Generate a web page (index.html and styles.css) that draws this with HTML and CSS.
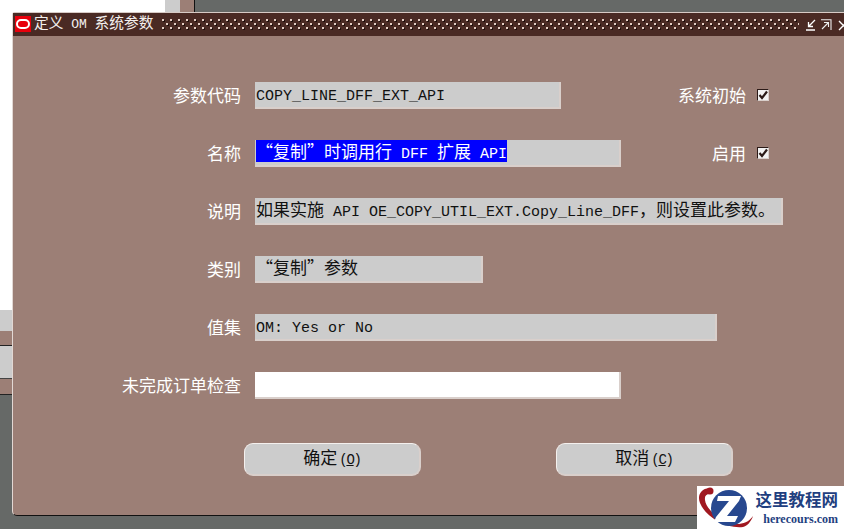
FILE: index.html

```html
<!doctype html>
<html lang="zh-CN">
<head>
    <title>定义 OM 系统参数</title>
    <link rel="stylesheet" href="styles.css">
    <meta charset="utf-8">
</head>
<body>
    <!-- windows behind the dialog -->
    <div class="win-white"></div>
    <div class="win-strip-a"></div>
    <div class="win-strip-b"></div>
    <div class="win-strip-c"></div>
    <div class="win-strip-d"></div>
    <div class="win-top-a"></div>
    <div class="win-top-b"></div>

    <div class="dialog">
        <div class="titlebar">
            <svg class="ora" width="16" height="16" viewBox="0 0 16 16">
                <rect width="16" height="16" fill="#e8000c"/>
                <rect x="2" y="4" width="12" height="8" rx="4" fill="none" stroke="#fff" stroke-width="2"/>
            </svg>
            <span class="title"><span class="zh">定义</span> OM <span class="zh">系统参数</span></span>
            <div class="dots"></div>
            <div class="controls">
                <svg width="12" height="12" viewBox="0 0 12 12"><path d="M10 1 L4 7 M3.5 3 V7.5 H8 M1 11 H10" fill="none" stroke="#fff" stroke-width="1.3"/></svg>
                <svg width="12" height="12" viewBox="0 0 12 12"><path d="M1 .7 H11 V11 M2 10 L8 4 M4 3.5 H8.5 V8" fill="none" stroke="#eee" stroke-width="1.1"/></svg>
                <svg class="close" width="12" height="12" viewBox="0 0 12 12"><path d="M2 2 L11 11 M11 2 L2 11" fill="none" stroke="#fff" stroke-width="1.4"/></svg>
            </div>
        </div>

        <div class="form">
            <div class="row">
                <label class="lbl">参数代码</label>
                <div class="field w306">COPY_LINE_DFF_EXT_API</div>
                <div class="flag"><span>系统初始</span><i class="check"><svg width="10" height="10" viewBox="0 0 10 10"><path d="M1.5 5 L4 8 L9 1.5" fill="none" stroke="#2b1a17" stroke-width="2.2"/></svg></i></div>
            </div>
            <div class="row">
                <label class="lbl">名称</label>
                <div class="field w366"><span class="sel"><span class="zh">“复制”时调用行</span> DFF <span class="zh">扩展</span> API</span></div>
                <div class="flag"><span>启用</span><i class="check"><svg width="10" height="10" viewBox="0 0 10 10"><path d="M1.5 5 L4 8 L9 1.5" fill="none" stroke="#2b1a17" stroke-width="2.2"/></svg></i></div>
            </div>
            <div class="row">
                <label class="lbl">说明</label>
                <div class="field w528"><span class="zh">如果实施</span> API OE_COPY_UTIL_EXT.Copy_Line_DFF<span class="zh">，则设置此参数。</span></div>
            </div>
            <div class="row">
                <label class="lbl">类别</label>
                <div class="field w228"><span class="zh">“复制”参数</span></div>
            </div>
            <div class="row">
                <label class="lbl">值集</label>
                <div class="field w462">OM: Yes or No</div>
            </div>
            <div class="row">
                <label class="lbl">未完成订单检查</label>
                <div class="field w366 blank"></div>
            </div>
            <div class="buttons">
                <button type="button"><span class="zh">确定</span>(<u>O</u>)</button>
                <button type="button"><span class="zh">取消</span>(<u>C</u>)</button>
            </div>
        </div>
    </div>

    <div class="mark">
        <svg width="58" height="43" viewBox="0 0 58 43">
            <path d="M12 2 C4 3 0 9 3 17 C8 30 28 43 46 41 C50 40 54 36 56 30 C52 36 46 38 40 38 C26 38 9 24 8 14 C7.5 10 9 8 13 8 Z" fill="#a01820"/>
            <circle cx="13" cy="5" r="3.5" fill="#a01820"/>
            <circle cx="32" cy="22" r="18" fill="#27488f"/>
            <path d="M21 10 H44 L42 15 L30 30 H41 L38 36 H17 L19 31 L32 15 H20 Z" fill="#fff"/>
        </svg>
        <div class="mark-text">
            <b>这里教程网</b>
            <span>herecours.com</span>
        </div>
    </div>
</body>
</html>
```

FILE: styles.css

```css
body {
    margin: 0;
    width: 844px;
    height: 529px;
    overflow: hidden;
    position: relative;
    background-color: #666967;
    font-family: "Liberation Mono", "Noto Sans CJK SC", monospace;
}

.zh {
    font-family: "Noto Sans CJK SC", sans-serif;
    font-size: 17px;
    line-height: 1;
}

/* desktop windows showing round the dialog */
.win-white { position: absolute; left: 0; top: 0; width: 165px; height: 310px; background-color: #fff; }
.win-strip-a { position: absolute; left: 0; top: 310px; width: 12px; height: 21px; background-color: #ccc; }
.win-strip-b { position: absolute; left: 0; top: 331px; width: 12px; height: 14px; background-color: #9c7f76; border-bottom: 1px solid #222; }
.win-strip-c { position: absolute; left: 0; top: 346px; width: 12px; height: 32px; background-color: #ccc; }
.win-strip-d { position: absolute; left: 0; top: 378px; width: 12px; height: 15px; background-color: #9c7f76; border-top: 1px solid #444; border-bottom: 1px solid #222; }
.win-top-a { position: absolute; left: 165px; top: 0; width: 15px; height: 12px; background-color: #ccc; }
.win-top-b { position: absolute; left: 180px; top: 0; width: 14px; height: 12px; background-color: #9c7f76; border-right: 1px solid #111; }

.dialog {
    position: absolute;
    left: 12px;
    top: 12px;
    width: 840px;
    height: 504px;
    box-sizing: border-box;
    background-color: #9c7f76;
    border-top: 1px solid #d8cbc6;
    border-left: 1px solid #e2d8d4;
    border-bottom: 1px solid #111;
    border-radius: 3px 0 0 5px;
}

.titlebar {
    display: flex;
    align-items: center;
    height: 23px;
    background-color: #4a2a24;
    color: #fff;
}
.ora { margin: 0 3px 0 2px; flex: none; position: relative; top: -1px; }
.title { font-size: 13px; line-height: 23px; white-space: nowrap; color: #f4f0ee; }
.title .zh { font-size: 14.7px; }
.dots {
    flex: 1;
    height: 11px;
    margin: 0 6px 0 9px;
    background-image:
        radial-gradient(circle at 1px 1px, #e3cdc4 1px, transparent 1px),
        radial-gradient(circle at 1px 1px, #e3cdc4 1px, transparent 1px),
        radial-gradient(circle at 2px 2px, #1f0f0c 1px, transparent 1px),
        radial-gradient(circle at 2px 2px, #1f0f0c 1px, transparent 1px);
    background-size: 8px 8px;
    background-position: 0 0, 4px 4px, 0 0, 4px 4px;
}
.controls {
    display: flex;
    gap: 3px;
    margin-right: 3px;
}
.controls svg { display: block; }
.controls .close { margin-left: 2px; }

.form { padding: 46px 82px 0 0; }

.row {
    display: flex;
    height: 27px;
    margin-bottom: 31px;
}
.lbl {
    width: 228px;
    flex: none;
    text-align: right;
    font-size: 17px;
    line-height: 31px;
    color: #fff;
    margin-right: 14px;
    white-space: nowrap;
}
.field {
    flex: none;
    box-sizing: border-box;
    height: 27px;
    padding-left: 1px;
    background-color: #cccccc;
    border-right: 2px solid #d9cfcb;
    border-bottom: 2px solid #d9cfcb;
    color: #111;
    font-size: 15px;
    line-height: 30px;
    white-space: nowrap;
}
.w228 { width: 228px; }
.w306 { width: 306px; }
.w366 { width: 366px; }
.w462 { width: 462px; }
.w528 { width: 528px; }
.blank { background-color: #fff; }
.sel {
    display: block;
    width: fit-content;
    height: 22px;
    background-color: #0000ff;
    color: #fff;
}

.flag {
    margin-left: auto;
    margin-right: 1px;
    display: flex;
    align-items: center;
    height: 25px;
    font-size: 17px;
    color: #fff;
}
.flag span { margin-right: 11px; }
.check {
    display: flex;
    align-items: center;
    justify-content: center;
    width: 12px;
    height: 12px;
    box-sizing: border-box;
    background-color: #f2f2f2;
    border: 1px solid #2b1a17;
    border-right-color: #d9cfcb;
    border-bottom-color: #d9cfcb;
}

.buttons {
    display: flex;
    gap: 135px;
    margin: 44px 0 0 231px;
}
button {
    width: 177px;
    height: 33px;
    padding: 0 0 2px;
    background-color: #cccccc;
    border: none;
    border-top: 1px solid #f4f0ee;
    border-left: 1px solid #f4f0ee;
    border-right: 2px solid #d9cfcb;
    border-bottom: 2px solid #d9cfcb;
    border-radius: 9px;
    color: #111;
    font-family: "Liberation Mono", "Noto Sans CJK SC", monospace;
    font-size: 14px;
    letter-spacing: -1.2px;
}
button .zh { letter-spacing: 0; margin-right: 2px; }

.mark {
    position: absolute;
    left: 697px;
    top: 486px;
    width: 147px;
    height: 43px;
    display: flex;
    background-color: #fff;
}
.mark svg { flex: none; margin-right: 1px; }
.mark-text {
    display: flex;
    flex-direction: column;
    align-items: flex-end;
    width: 82px;
    color: #1f3f7f;
}
.mark-text b {
    font-family: "Noto Sans CJK SC", sans-serif;
    font-size: 16.5px;
    line-height: 24px;
    margin-top: 1px;
    white-space: nowrap;
}
.mark-text span {
    font-family: "Liberation Serif", serif;
    font-weight: bold;
    font-size: 12px;
    line-height: 14px;
    margin-top: 1px;
}
```
